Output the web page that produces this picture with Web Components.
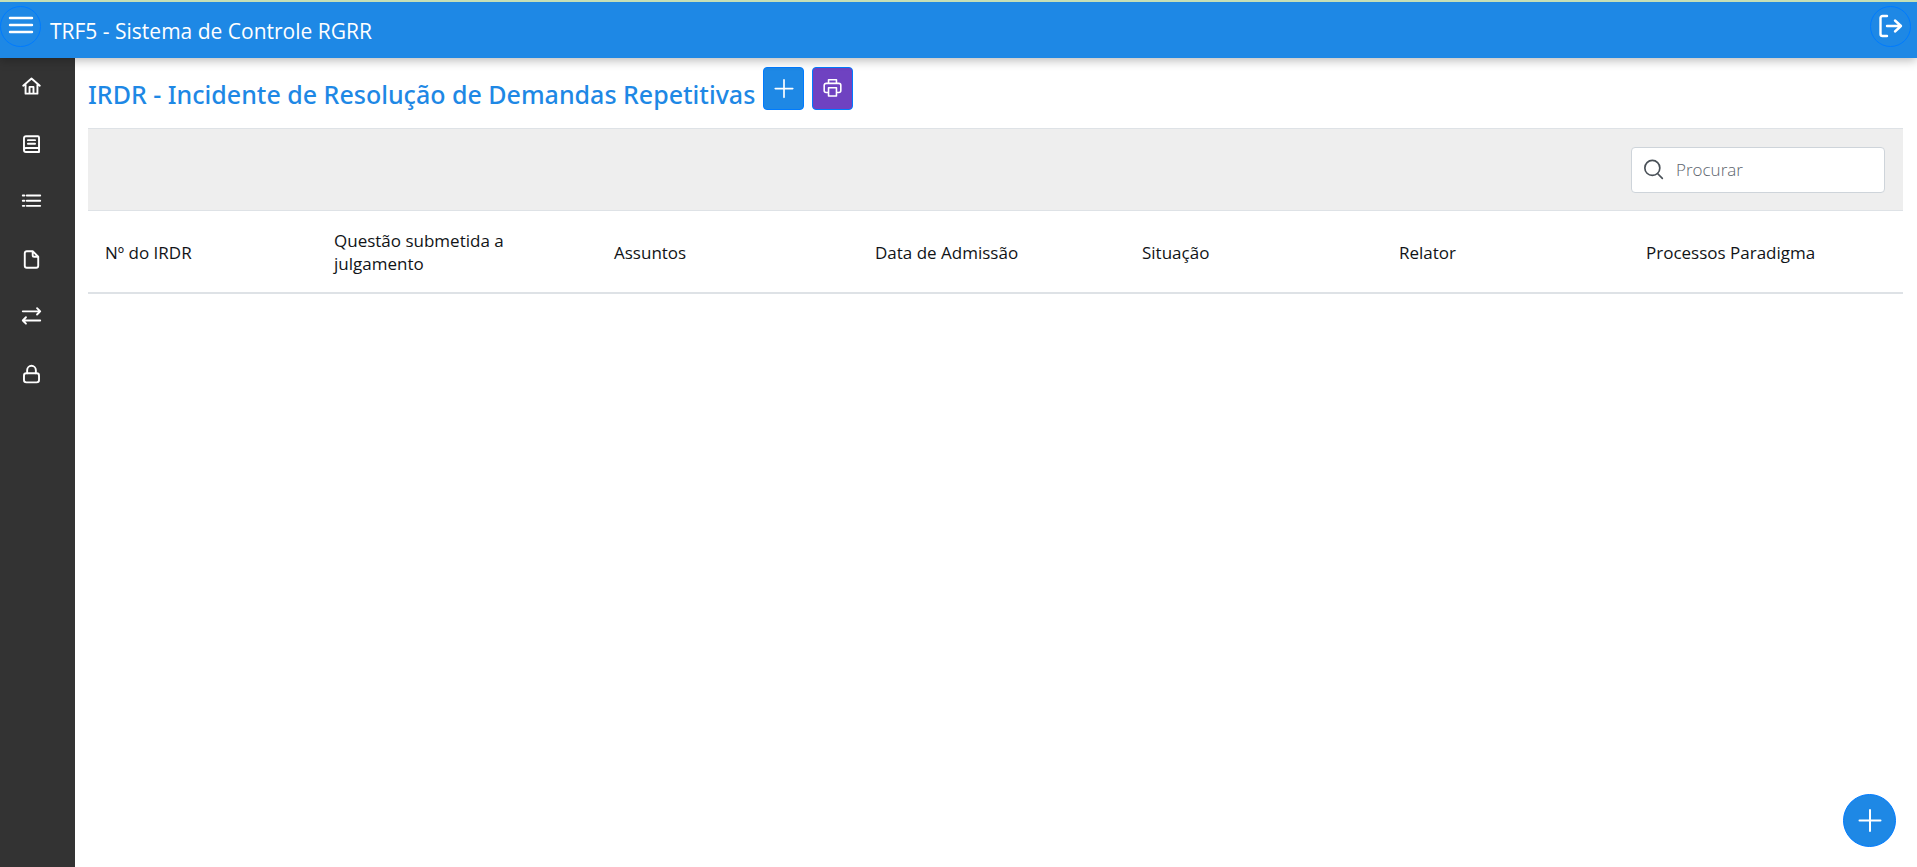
<!DOCTYPE html>
<html lang="pt-BR">
<head>
<meta charset="utf-8">
<meta name="viewport" content="width=device-width, initial-scale=1">
<title>TRF5 - Sistema de Controle RGRR</title>
<style>
  body { margin: 0; background: #fff; font-family: "Open Sans", "Noto Sans", sans-serif; color: #111417; }
</style>
</head>
<body>
<rgrr-app></rgrr-app>
<script>
const ICONS = {
  menu: '<path d="M1 3h22M1 10h22M1 17h22"/>',
  logout: '<path d="M8 1H3.500a2 2 0 0 0-2 2v16a2 2 0 0 0 2 2H8M8 11h14M16 5.500l6 5.500-6 5.500"/>',
  home: '<path d="M1.500 11 12 2l10.500 9M4.500 9.500V21h15V9.500M9.500 20.500v-8h5v8"/>',
  book: '<path d="M5 1.500h15A1.500 1.500 0 0 1 21.500 3v18.500H5A2.500 2.500 0 0 1 2.500 19V4A2.500 2.500 0 0 1 5 1.500zM21.500 16.500H5a2.500 2.500 0 0 0 0 5M7.500 6.500h9M7.500 11h9"/>',
  list: '<path d="M6 4.500h17M6 11h17M6 17.500h17M1 4.500h2M1 11h2M1 17.500h2"/>',
  file: '<path d="M13.500 1.500H6a2.500 2.500 0 0 0-2.500 2.500v16A2.500 2.500 0 0 0 6 22.500h12a2.500 2.500 0 0 0 2.500-2.500V8.500zM13.500 1.500v5a2 2 0 0 0 2 2h5"/>',
  swap: '<path d="M1 5.500h22M19 1.500l4 4-4 4M23 17H1M5 13l-4 4 4 4"/>',
  lock: '<rect x="2.500" y="10.500" width="19" height="11.500" rx="3"/><path d="M6.500 10.500V6.500a5.500 5.500 0 0 1 11 0v4"/>',
  plus: '<path d="M12 1v21M1.500 11.500h21"/>',
  print: '<path d="M7 5.500V1h10v4.500M7 17H4a2.500 2.500 0 0 1-2.500-2.500V8A2.500 2.500 0 0 1 4 5.500h16A2.500 2.500 0 0 1 22.500 8v6.500A2.500 2.500 0 0 1 20 17h-3M7 11h10v10.500H7z"/>',
  search: '<circle cx="10" cy="9.500" r="9"/><path d="M16.500 16.500 22 22"/>'
};

class Base extends HTMLElement {
  connectedCallback() {
    if (!this.shadowRoot) this.attachShadow({ mode: "open" }).innerHTML = this.view();
  }
}

customElements.define("rgrr-icon", class extends Base {
  view() {
    return `<style>
      :host { display: block; width: var(--icon-size, 20px); height: var(--icon-size, 20px); }
      svg { display: block; width: 100%; height: 100%; fill: none; stroke: currentColor; overflow: visible;
            stroke-width: var(--icon-stroke, 2); stroke-linecap: round; stroke-linejoin: round; }
    </style><svg viewBox="0 0 24 24" aria-hidden="true">${ICONS[this.getAttribute("name")]}</svg>`;
  }
});

customElements.define("rgrr-button", class extends Base {
  view() {
    return `<style>
      :host { display: block; }
      button { display: flex; align-items: center; justify-content: center; box-sizing: border-box; width: 41px; height: 43px;
               margin: 0; padding: 0; border: 1px solid #007bff; border-radius: 4px; background: #1e88e5; color: #fff; cursor: pointer; }
      :host([kind="print"]) button { background: #6f42c1; --icon-size: 19px; }
      :host([kind="round"]) button { height: 41px; border-radius: 50%; --icon-size: 24px; --icon-stroke: 2.4; }
      :host([kind="fab"]) button { width: 53px; height: 53px; border-radius: 50%; --icon-size: 24px; }
    </style><button type="button" aria-label="${this.getAttribute("label")}"><rgrr-icon name="${this.getAttribute("icon")}"></rgrr-icon></button>`;
  }
});

customElements.define("rgrr-topbar", class extends Base {
  view() {
    return `<style>
      :host { display: flex; align-items: flex-start; position: relative; z-index: 1; box-sizing: border-box; height: 58px; padding: 4px 6px 0 0;
              border-top: 2px solid #c5dfb6; background: #1e88e5; color: #fff; box-shadow: 0 2px 10px rgba(0, 0, 0, .3); }
      .title { flex: 1; padding: 9px 0 0 9px; font-size: 21px; line-height: 32px; }
    </style>
    <rgrr-button kind="round" icon="menu" label="Menu"></rgrr-button>
    <span class="title"><slot></slot></span>
    <rgrr-button kind="round" icon="logout" label="Sair"></rgrr-button>`;
  }
});

customElements.define("rgrr-sidebar", class extends Base {
  view() {
    const items = [["home", "Início"], ["book", "Livro"], ["list", "Lista"], ["file", "Documento"], ["swap", "Movimentação"], ["lock", "Acesso"]];
    return `<style>
      :host { display: block; width: 75px; background: #333; color: #fff; --icon-size: 19px; --icon-stroke: 2.4; }
      nav { display: grid; grid-template-rows: repeat(6, 1fr); height: 345px; }
      a { display: flex; align-items: center; padding-left: 22px; color: inherit; }
    </style><nav>${items.map(([i, l]) => `<a href="#${i}" aria-label="${l}"><rgrr-icon name="${i}"></rgrr-icon></a>`).join("")}</nav>`;
  }
});

customElements.define("rgrr-search", class extends Base {
  view() {
    return `<style>
      :host { display: block; }
      label { display: flex; align-items: center; gap: 12px; box-sizing: border-box; width: 254px; height: 46px; padding: 0 12px;
              border: 1px solid #ced4da; border-radius: 4px; background: #fff; color: #495057; }
      input { flex: 1; min-width: 0; padding: 0; border: 0; outline: 0; background: none; font: 300 17px/24px "Open Sans", "Noto Sans", sans-serif; color: inherit; }
      input::placeholder { color: #5c656d; opacity: 1; }
    </style><label><rgrr-icon name="search"></rgrr-icon><input type="text" placeholder="Procurar" aria-label="Procurar"></label>`;
  }
});

customElements.define("rgrr-table", class extends Base {
  view() {
    const cols = [["Nº do IRDR", 229], ["Questão submetida a julgamento", 280], ["Assuntos", 261], ["Data de Admissão", 267],
                  ["Situação", 257], ["Relator", 247], ["Processos Paradigma", 274]];
    return `<style>
      :host { display: block; }
      .bar { display: flex; justify-content: flex-end; padding: 18px 18px 17px; border: solid #dee2e6; border-width: 1px 0; background: #eee; }
      table { width: 100%; table-layout: fixed; border-collapse: separate; border-spacing: 0; }
      th { height: 48px; padding: 17px 17px 16px; border-bottom: 2px solid #dee2e6; text-align: left; vertical-align: middle;
           font-size: 17px; line-height: 23px; font-weight: 500; }
    </style>
    <div class="bar"><rgrr-search></rgrr-search></div>
    <table>
      <colgroup>${cols.map(([, w]) => `<col style="width:calc(100% * ${w} / 1815)">`).join("")}</colgroup>
      <thead><tr>${cols.map(([t]) => `<th scope="col">${t}</th>`).join("")}</tr></thead>
    </table>`;
  }
});

customElements.define("rgrr-app", class extends Base {
  view() {
    return `<style>
      :host { display: flex; flex-direction: column; min-height: 100vh; }
      .body { display: flex; flex: 1; }
      main { flex: 1; min-width: 0; padding: 9px 14px 0 13px; }
      .head { display: flex; align-items: flex-start; gap: 8px; margin-bottom: 17px; }
      h1 { margin: 0; padding-top: 10px; color: #1e88e5; font-family: "Noto Sans", "Open Sans", sans-serif; font-size: 25px; line-height: 34px; font-weight: 500; }
      .fab { position: fixed; right: 21px; bottom: 20px; }
    </style>
    <rgrr-topbar>TRF5 - Sistema de Controle RGRR</rgrr-topbar>
    <div class="body">
      <rgrr-sidebar></rgrr-sidebar>
      <main>
        <div class="head">
          <h1>IRDR - Incidente de Resolução de Demandas Repetitivas</h1>
          <rgrr-button icon="plus" label="Adicionar"></rgrr-button>
          <rgrr-button kind="print" icon="print" label="Imprimir"></rgrr-button>
        </div>
        <rgrr-table></rgrr-table>
      </main>
    </div>
    <rgrr-button class="fab" kind="fab" icon="plus" label="Novo"></rgrr-button>`;
  }
});
</script>
</body>
</html>
